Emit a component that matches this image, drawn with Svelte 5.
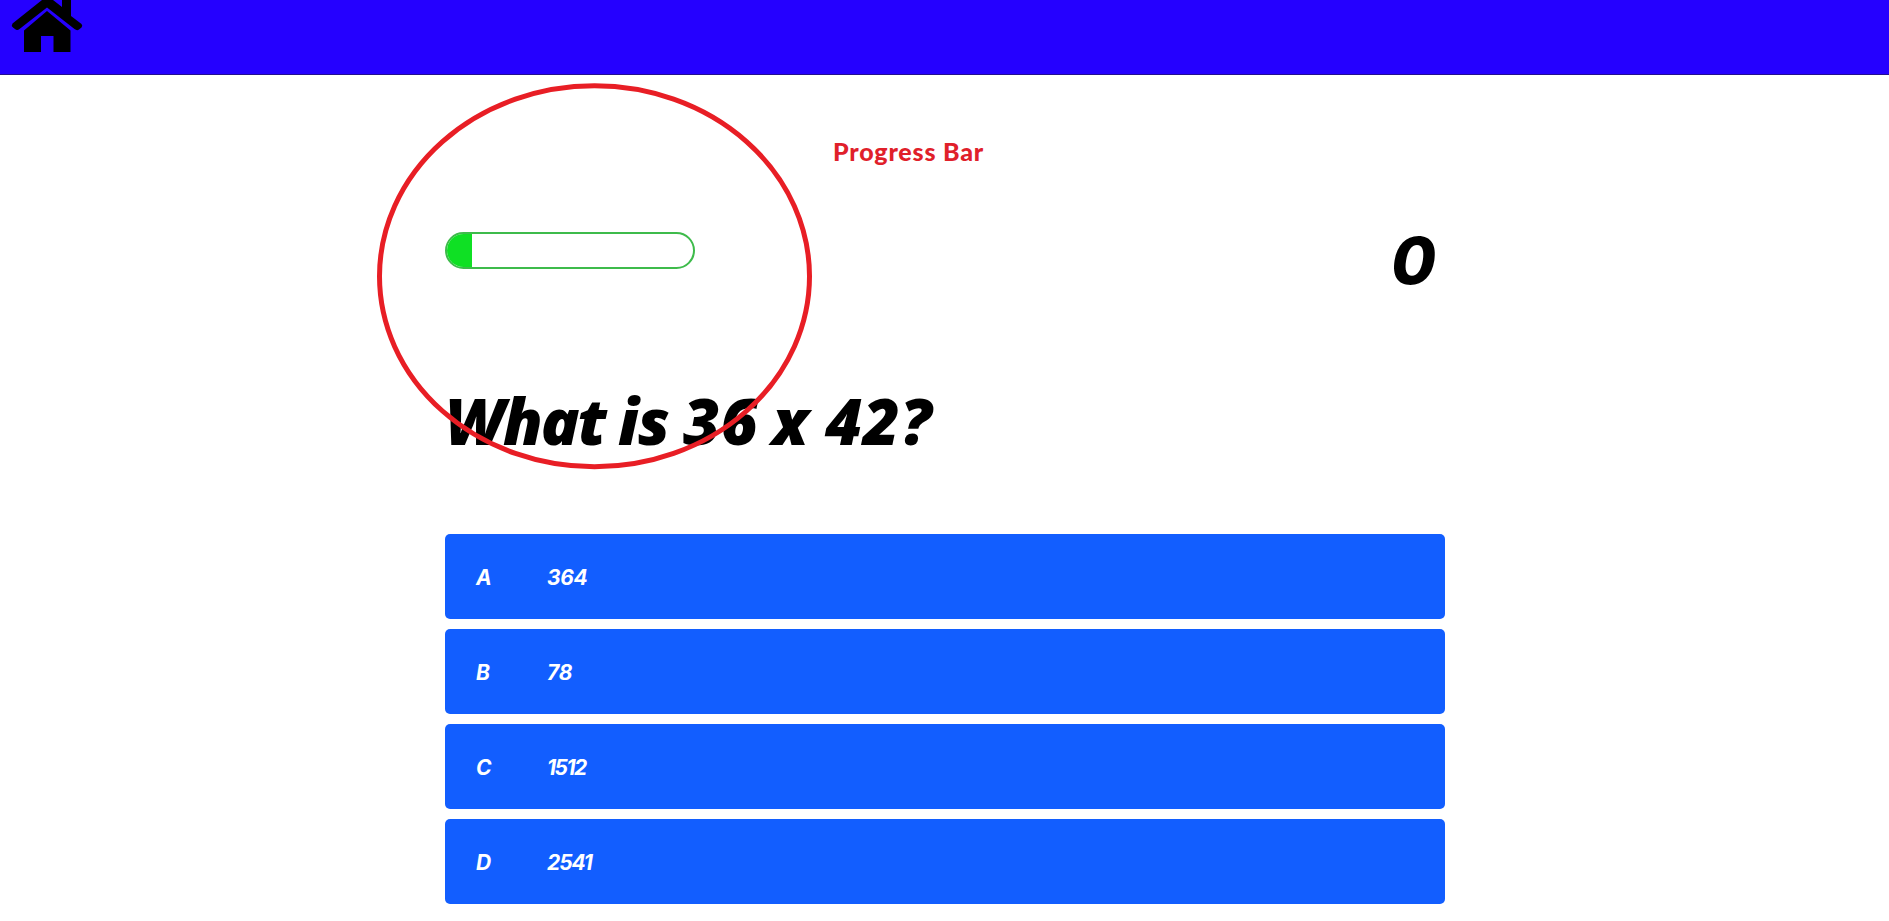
<script>
  const words = [
    { text: 'What', width: 173, spacing: -1.9 },
    { text: 'is', width: 65, spacing: -1 },
    { text: '36', width: 89, spacing: 0.5 },
    { text: 'x', width: 53, spacing: 0 },
    { text: '42?', width: 120, spacing: 0.5 }
  ];
  const choices = [
    { letter: 'A', answer: '364', spacing: -0.3 },
    { letter: 'B', answer: '78', spacing: -0.3 },
    { letter: 'C', answer: '1512', spacing: -1.5 },
    { letter: 'D', answer: '2541', spacing: -1.1 }
  ];
  const progress = 10.2;
</script>

<header>
  <svg class="home" viewBox="0 0 90 75" aria-label="Home">
    <path d="M62 0H71V16L81.500 24Q83 25.500 81.500 27.500L79 29.500Q77 31 74.500 29L47 7.500L19.500 29Q17 31 15 29L13 27.500Q11 25.500 12.500 23.500L42 0H53L62 7Z" />
    <path d="M24 30.500L47 11L70.500 30.500V52H53.500V36H41V52H24Z" />
  </svg>
</header>

<main>
  <section class="hud">
    <div class="bar"><div class="fill" style:width="{progress}%"></div></div>
    <div class="score">0</div>
  </section>

  <h1>
    {#each words as w}<span style:width="{w.width}px" style:letter-spacing="{w.spacing}px">{w.text}</span>{/each}
  </h1>

  <div class="choices">
    {#each choices as c}
      <div class="choice"><span class="letter">{c.letter}</span><span style:letter-spacing="{c.spacing}px">{c.answer}</span></div>
    {/each}
  </div>
</main>

<svg class="ring" viewBox="0 0 435 387"><ellipse cx="217.5" cy="193.3" rx="215" ry="190.500" /></svg>
<div class="note">Progress Bar</div>

<style>
  :global(body) { background: #fff; overflow: hidden; }
  header { height: 75px; background: #2500ff; border-bottom: 1px solid #24108f; box-sizing: border-box; }
  .home { display: block; width: 90px; height: 75px; fill: #000; }
  main {
    width: 1000px; margin-left: 445px; color: #000;
    font-family: "Open Sans", sans-serif; font-style: italic;
  }
  .hud { display: flex; justify-content: space-between; align-items: flex-start; padding-top: 157px; height: 153px; }
  .bar { box-sizing: border-box; width: 250px; height: 37px; border: 2px solid #3ebb4b; border-radius: 19px; overflow: hidden; }
  .fill { height: 100%; background: #0fe024; }
  .score { font: italic 800 65px/57px Inter, sans-serif; padding-right: 9px; }
  h1 { display: flex; margin: 0; height: 149px; font-size: 64px; line-height: 71px; font-weight: 800; white-space: nowrap; }
  h1 span { flex: none; }
  .choices { display: flex; flex-direction: column; gap: 10px; }
  .choice {
    display: flex; align-items: center; height: 85px; padding: 2px 0 0 31px; box-sizing: border-box;
    background: #125eff; border-radius: 5px; color: #fff;
    font-family: Inter, sans-serif; font-size: 21px; font-weight: 700;
  }
  .letter { width: 71px; }
  .ring { position: absolute; left: 377px; top: 83px; width: 435px; height: 387px; fill: none; stroke: #e81e25; stroke-width: 5; }
  .note {
    position: absolute; left: 833px; top: 136px; color: #e0202a; letter-spacing: 0.8px;
    font: 900 25px/30px Lato, sans-serif; white-space: nowrap;
  }
</style>
